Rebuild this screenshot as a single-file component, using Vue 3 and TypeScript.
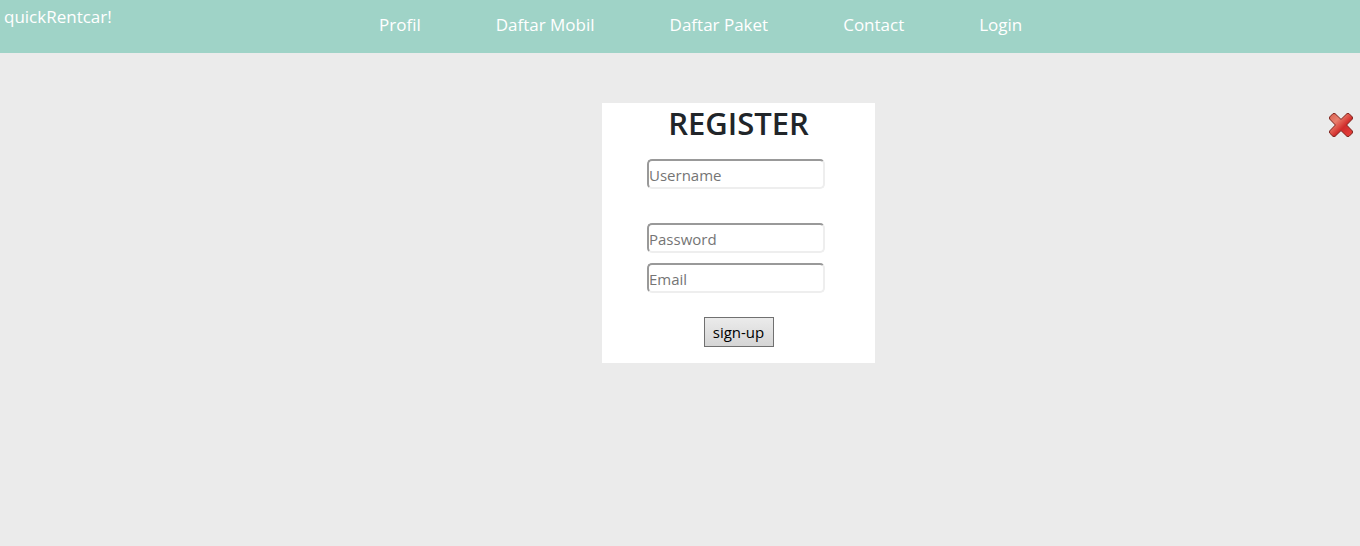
<script setup lang="ts">
import { reactive } from 'vue'

interface NavItem {
  label: string
  href: string
}

const navItems: NavItem[] = [
  { label: 'Profil', href: '#profil' },
  { label: 'Daftar Mobil', href: '#daftar-mobil' },
  { label: 'Daftar Paket', href: '#daftar-paket' },
  { label: 'Contact', href: '#contact' },
  { label: 'Login', href: '#login' },
]

const form = reactive({ username: '', password: '', email: '' })
</script>

<template>
  <div class="page">
    <header class="topbar">
      <a class="brand" href="#">quickRentcar!</a>
      <nav class="menu">
        <a v-for="item in navItems" :key="item.label" :href="item.href">{{ item.label }}</a>
      </nav>
    </header>

    <main class="content">
      <form class="card" @submit.prevent>
        <h2>REGISTER</h2>
        <input v-model="form.username" class="username" type="text" placeholder="Username" aria-label="Username" />
        <input v-model="form.password" type="password" placeholder="Password" aria-label="Password" />
        <input v-model="form.email" type="email" placeholder="Email" aria-label="Email" />
        <button class="submit" type="submit">sign-up</button>
      </form>

      <button class="close" type="button" aria-label="Close">
        <svg viewBox="0 0 24 24" width="24" height="24" aria-hidden="true">
          <defs>
            <linearGradient id="crossFill" x1="0" y1="0" x2="1" y2="1">
              <stop offset="0" stop-color="#d8614f" />
              <stop offset="0.3" stop-color="#e8806f" />
              <stop offset="0.5" stop-color="#dc4a42" />
              <stop offset="0.6" stop-color="#d02c2c" />
              <stop offset="1" stop-color="#e8403c" />
            </linearGradient>
          </defs>
          <path
            d="M4 .6H6L12 6.4L18 .6H20L23.4 4V6L17.6 12L23.4 18V20L20 23.4H18L12 17.6L6 23.4H4L.6 20V18L6.4 12L.6 6V4Z"
            fill="url(#crossFill)"
            stroke="#7c211b"
            stroke-width="1"
            stroke-linejoin="round"
          />
        </svg>
      </button>
    </main>
  </div>
</template>

<style>
body {
  margin: 0;
  background: #ebebeb;
}
</style>

<style scoped>
.page {
  min-height: 100vh;
  background: #ebebeb;
  color: #212529;
  font-family: 'Segoe UI', 'Open Sans', 'Noto Sans', sans-serif;
  font-size: 15px;
  line-height: 24px;
}

.topbar {
  display: grid;
  grid-template-columns: 379fr 981fr;
  align-items: start;
  height: 53px;
  background: #9fd3c7;
}

.topbar a {
  color: #fff;
  font-size: 17px;
  text-decoration: none;
  white-space: nowrap;
}

.brand {
  padding: 5px 4px;
}

.menu {
  display: flex;
  gap: 75px;
  padding-top: 13px;
}

.content {
  display: grid;
  grid-template-columns: 602fr 273px 485fr;
  align-items: start;
  padding-top: 50px;
}

.card {
  grid-column: 2;
  display: flex;
  flex-direction: column;
  box-sizing: border-box;
  padding: 0 45px 16px;
  background: #fff;
}

h2 {
  margin: 0 0 16px;
  font-size: 31px;
  font-weight: 600;
  line-height: 40px;
  text-align: center;
}

input {
  box-sizing: border-box;
  width: 178px;
  height: 30px;
  margin: 0 0 10px;
  padding: 2px 0 0;
  border: 2px solid;
  border-color: #999 #eee #eee #999;
  border-radius: 5px;
  background: #fff;
  color: #212529;
  font: inherit;
}

input::placeholder {
  color: #757575;
  opacity: 1;
}

.username {
  margin-bottom: 34px;
}

.submit {
  align-self: center;
  box-sizing: border-box;
  width: 70px;
  height: 30px;
  margin-top: 14px;
  padding: 0;
  border: 1px solid #707070;
  background: linear-gradient(#ebebeb, #d5d5d5);
  color: #000;
  font: inherit;
}

.close {
  justify-self: end;
  margin: 10px 7px 0 0;
  padding: 0;
  border: 0;
  background: none;
  cursor: pointer;
}

.close svg {
  display: block;
}
</style>
